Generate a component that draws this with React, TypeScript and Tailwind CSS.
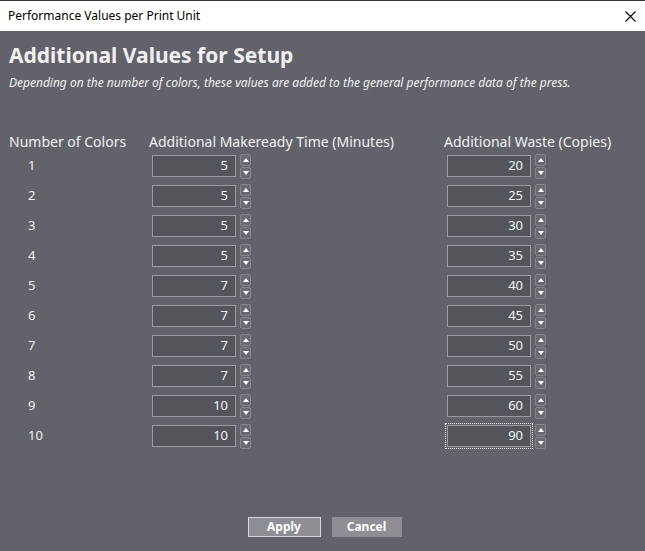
const rows: [number, number, number][] = [
  [1, 5, 20], [2, 5, 25], [3, 5, 30], [4, 5, 35], [5, 7, 40],
  [6, 7, 45], [7, 7, 50], [8, 7, 55], [9, 10, 60], [10, 10, 90],
];

function Spin({ value, focused }: { value: number; focused?: boolean }) {
  return (
    <div className="flex items-center gap-[3px]">
      <div className={`p-px ${focused ? 'outline-1 outline-dotted outline-white' : ''}`}>
        <div className="flex h-[22px] w-[84px] items-center justify-end border border-[#9b9ba0] bg-[#54545b] pr-[7px] text-[13px] text-[#eef4f0]">
          {value}
        </div>
      </div>
      <div className="flex flex-col gap-px">
        <div className="flex h-[12px] w-[11px] items-center justify-center rounded-[2px] border border-[#85858b] bg-[#6a6a71]">
          <div className="h-0 w-0 border-x-[3px] border-b-[4px] border-x-transparent border-b-white" />
        </div>
        <div className="flex h-[12px] w-[11px] items-center justify-center rounded-[2px] border border-[#85858b] bg-[#6a6a71]">
          <div className="h-0 w-0 border-x-[3px] border-t-[4px] border-x-transparent border-t-white" />
        </div>
      </div>
    </div>
  );
}

export default function App() {
  return (
    <div className="flex h-[551px] w-[645px] flex-col bg-[#62626a] font-['Liberation_Sans',Arial,sans-serif] text-[#f0f0f0]">
      <div className="flex h-[31px] items-center justify-between border-t border-[#333] bg-white pl-[8px] pr-[9px] font-['Noto_Sans',sans-serif] text-[12px] text-black">
        <span>Performance Values per Print Unit</span>
        <svg width="11" height="11" viewBox="0 0 11 11" stroke="black" strokeWidth="1.1">
          <path d="M0.5 0.5L10.5 10.5M10.5 0.5L0.5 10.5" />
        </svg>
      </div>
      <div className="flex flex-1 flex-col px-[9px]">
        <h1 className="mt-[11px] text-[21px] font-bold leading-[26px]">Additional Values for Setup</h1>
        <p className="mt-[7px] text-[12px] italic leading-[16px]">
          Depending on the number of colors, these values are added to the general performance data of the press.
        </p>
        <div className="mt-[43px] flex text-[14px] leading-[16px]">
          <span className="w-[140px]">Number of Colors</span>
          <span className="w-[295px]">Additional Makeready Time (Minutes)</span>
          <span>Additional Waste (Copies)</span>
        </div>
        <div className="mt-[3px] flex flex-col gap-[4px]">
          {rows.map(([n, t, w]) => (
            <div key={n} className="flex h-[26px] items-center text-[13px]">
              <span className="w-[142px] pl-[19px]">{n}</span>
              <div className="w-[295px]"><Spin value={t} /></div>
              <Spin value={w} focused={n === 10} />
            </div>
          ))}
        </div>
        <div className="mt-auto mb-[14px] flex justify-center gap-[11px] pl-[4px] text-[12px] font-bold">
          <button className="h-[20px] w-[73px] border border-[#d8d8dc] bg-[#8e8e94] text-white">Apply</button>
          <button className="h-[20px] w-[70px] bg-[#8e8e94] text-white">Cancel</button>
        </div>
      </div>
    </div>
  );
}
